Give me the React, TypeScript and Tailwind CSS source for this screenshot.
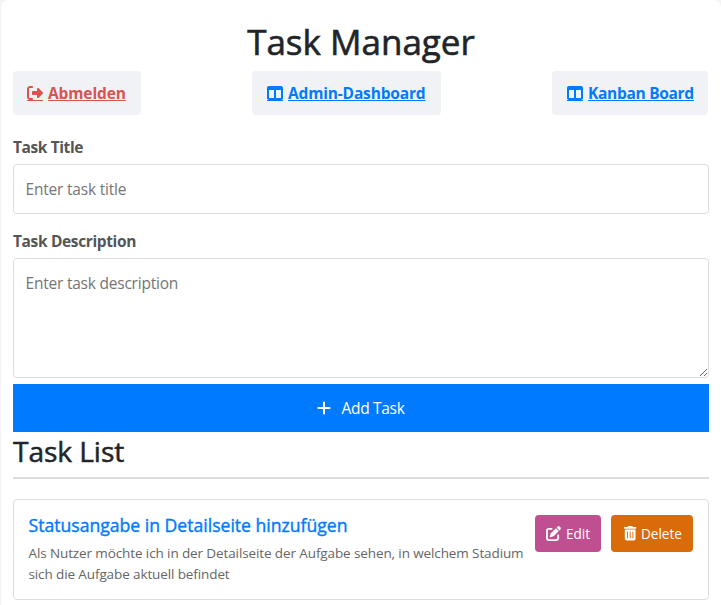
import React from "react";
import { FaPenToSquare, FaPlus, FaRightFromBracket, FaTableColumns, FaTrashCan } from "react-icons/fa6";

type NavItemProps = {
  icon: React.ReactNode;
  label: string;
  className: string;
  textClassName: string;
};

function NavItem({ icon, label, className, textClassName }: NavItemProps) {
  return (
    <a href="#" className={`flex h-11 items-center rounded bg-[#f1f2f6] text-base font-bold ${className}`}>
      <span className="mt-px mr-[5px] flex h-[15px] w-4 shrink-0 items-center border-b border-current">
        <span className="shrink-0">{icon}</span>
      </span>
      <span className={`pt-0.5 text-[15.5px] whitespace-nowrap underline decoration-1 underline-offset-1 ${textClassName}`}>
        {label}
      </span>
    </a>
  );
}

export default function App() {
  return (
    <div className="h-[605px] w-[721px] overflow-hidden bg-[#f4f4f4] pl-px font-['Open_Sans','Noto_Sans',sans-serif] text-[#212529]">
      <main className="h-full rounded-t-lg bg-white px-3">
        <h1 className="flex h-[71px] items-center justify-center pt-[13px] text-[35px] font-medium whitespace-nowrap [-webkit-text-stroke:0.6px_currentColor]">
          <span>Task Manager</span>
        </h1>
        <nav className="flex justify-between pr-px">
          <NavItem
            icon={<FaRightFromBracket />}
            label="Abmelden"
            className="w-32 pl-3.5 text-[#d9534f]"
            textClassName="tracking-[-0.12px]"
          />
          <NavItem
            icon={<FaTableColumns />}
            label="Admin-Dashboard"
            className="w-[189px] pl-[15px] text-[#007bff]"
            textClassName="tracking-[-0.17px]"
          />
          <NavItem
            icon={<FaTableColumns />}
            label="Kanban Board"
            className="w-[156px] pl-[15px] text-[#007bff]"
            textClassName="tracking-[-0.3px]"
          />
        </nav>
        <form>
          <label className="mt-5 flex h-[29px] items-start text-[15.5px] leading-6 font-bold tracking-[-0.4px] text-[#555]">
            <span>Task Title</span>
          </label>
          <input
            className="block h-[50px] w-full rounded border border-[#ddd] px-[11.5px] text-[15.5px] tracking-[-0.2px] placeholder:text-[#757575]"
            placeholder="Enter task title"
          />
          <label className="mt-[15px] flex h-[29px] items-start text-[15.5px] leading-6 font-bold tracking-[-0.36px] text-[#555]">
            <span>Task Description</span>
          </label>
          <textarea
            className="block h-[120px] w-full resize rounded border border-[#ddd] px-[11.5px] py-3 text-[15.5px] leading-6 tracking-[-0.22px] placeholder:text-[#757575]"
            placeholder="Enter task description"
          />
          <button
            type="button"
            className="mt-1.5 flex h-12 w-full items-center justify-center bg-[#007bff] text-[15.5px] tracking-[-0.3px] text-white"
          >
            <FaPlus className="mr-[9px] text-base" />
            <span className="pt-0.5 pr-px">Add Task</span>
          </button>
        </form>
        <h2 className="flex h-[47px] items-start border-b-2 border-[#ddd] text-[28.2px] leading-[39px] font-medium tracking-[-0.1px] [-webkit-text-stroke:0.5px_currentColor]">
          <span>Task List</span>
        </h2>
        <article className="mt-5 flex h-[101px] justify-between rounded border border-[#ddd] p-[15px] pl-[14.5px]">
          <div className="whitespace-nowrap">
            <h3 className="h-7 text-[17.6px] leading-[20px] font-medium text-[#007bff] [-webkit-text-stroke:0.4px_currentColor]">
              <span>Statusangabe in Detailseite hinzufügen</span>
            </h3>
            <p className="text-[13.5px] leading-[21px] tracking-[-0.11px] text-[#666]">
              <span>Als Nutzer möchte ich in der Detailseite der Aufgabe sehen, in welchem Stadium</span>
              <br />
              <span>sich die Aufgabe aktuell befindet</span>
            </p>
          </div>
          <div className="flex gap-2.5 text-[13.6px] text-white">
            <button type="button" className="flex h-[37px] w-[66px] items-center rounded bg-[#bf4f91] pl-[11px]">
              <FaPenToSquare className="mr-[5px] text-[15px]" />
              <span className="pt-0.5">Edit</span>
            </button>
            <button type="button" className="flex h-[37px] w-[82px] items-center rounded bg-[#d96b08] pl-[11.5px]">
              <FaTrashCan className="mr-1 text-[14.4px]" />
              <span className="pt-0.5">Delete</span>
            </button>
          </div>
        </article>
      </main>
    </div>
  );
}
